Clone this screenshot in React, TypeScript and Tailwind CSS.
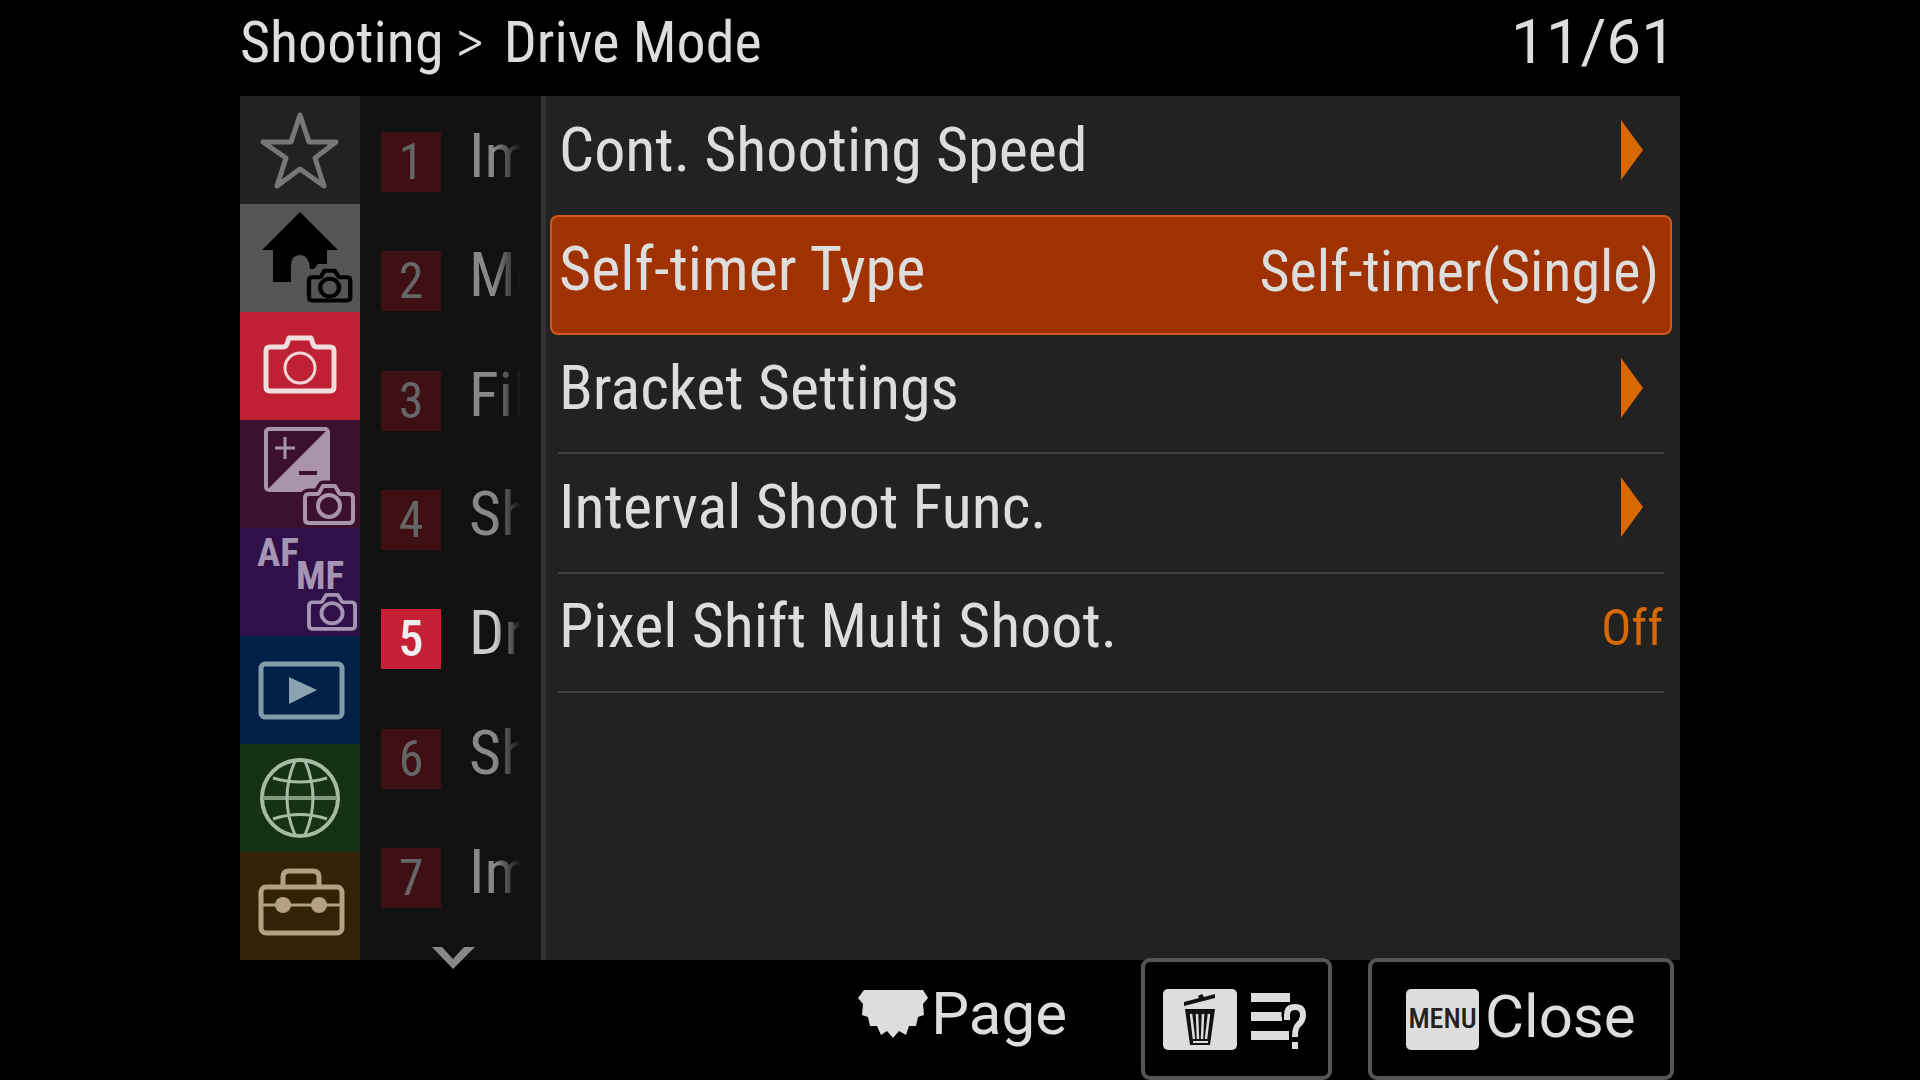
import type { ReactNode } from "react";

const smallCameraPath =
  "M4 9H12Q14 9 15 6L18 1H30L33 6Q34 9 36 9H44Q48 9 48 13V34Q48 38 44 38H4Q0 38 0 34V13Q0 9 4 9Z";

function TabIcon({ children }: { children: ReactNode }) {
  return (
    <svg viewBox="0 0 120 108" className="h-[108px] w-[120px] shrink-0" fill="none" strokeLinejoin="round" aria-hidden="true">
      {children}
    </svg>
  );
}

const tabs: { label: string; bg: string; icon: ReactNode }[] = [
  {
    label: "My Menu",
    bg: "bg-[#222222]",
    icon: (
      <TabIcon>
        <path d="M60 19L69 46H96L75 62L84 90L60 73L37 90L46 62L23 46H51Z" stroke="#777777" strokeWidth="5" />
      </TabIcon>
    ),
  },
  {
    label: "Main",
    bg: "bg-[#555555]",
    icon: (
      <TabIcon>
        <path d="M60 8L98 46H87V60H78L74 65H70Q69 51 60 51Q51 51 51 62V78H33V46H22Z" fill="#000000" />
        <g transform="translate(69 66) scale(0.86 0.8)" stroke="#000000" strokeWidth="5">
          <path d={smallCameraPath} fill="#555555" />
          <circle cx="24" cy="22" r="11" />
        </g>
      </TabIcon>
    ),
  },
  {
    label: "Shooting",
    bg: "bg-[#c02033]",
    icon: (
      <TabIcon>
        <path
          d="M30 35H43Q46 35 47 32L49 26H71L73 32Q74 35 77 35H90Q94 35 94 39V75Q94 79 90 79H30Q26 79 26 75V39Q26 35 30 35Z"
          stroke="#f0dede"
          strokeWidth="5"
        />
        <circle cx="60" cy="56" r="15" stroke="#f0d8d8" strokeWidth="3" />
      </TabIcon>
    ),
  },
  {
    label: "Exposure/Color",
    bg: "bg-[#3c1030]",
    icon: (
      <TabIcon>
        <rect x="26" y="9" width="62" height="61" rx="3" stroke="#aa94ac" strokeWidth="4" />
        <path d="M88 9V70H27Z" fill="#aa94ac" />
        <path d="M35 28H55M45 17V39" stroke="#aa94ac" strokeWidth="3" />
        <path d="M59 53H77" stroke="#3c1030" strokeWidth="4" />
        <g transform="translate(65 65)">
          <path d={smallCameraPath} fill="#3c1030" stroke="#3c1030" strokeWidth="11" />
          <path d={smallCameraPath} stroke="#aa94ac" strokeWidth="4" />
          <circle cx="24" cy="21" r="11" stroke="#aa94ac" strokeWidth="4" />
        </g>
      </TabIcon>
    ),
  },
  {
    label: "Focus",
    bg: "bg-[#2f1048]",
    icon: (
      <TabIcon>
        <g fill="#a694b4" fontFamily="'Roboto Condensed', Roboto, sans-serif" fontWeight="700" fontSize="39">
          <text x="17" y="38">AF</text>
          <text x="56" y="61">MF</text>
        </g>
        <g transform="translate(69 66) scale(0.96 0.92)" stroke="#a694b4" strokeWidth="4">
          <path d={smallCameraPath} />
          <circle cx="24" cy="21" r="11" />
        </g>
      </TabIcon>
    ),
  },
  {
    label: "Playback",
    bg: "bg-[#002045]",
    icon: (
      <TabIcon>
        <rect x="21" y="28" width="81" height="53" rx="4" stroke="#809ca8" strokeWidth="5" />
        <path d="M49 41L77 54L49 68Z" fill="#8ca4b2" />
      </TabIcon>
    ),
  },
  {
    label: "Network",
    bg: "bg-[#153212]",
    icon: (
      <TabIcon>
        <circle cx="60" cy="54" r="38" stroke="#a4bca4" strokeWidth="4" />
        <path d="M23 54H97" stroke="#7f987f" strokeWidth="4" />
        <path d="M33 34Q60 42 87 34M33 75Q60 66 87 75M55 17Q39 54 55 91M65 17Q81 54 65 91" stroke="#a4bca4" strokeWidth="3" />
      </TabIcon>
    ),
  },
  {
    label: "Setup",
    bg: "bg-[#332205]",
    icon: (
      <TabIcon>
        <g stroke="#b4a082" strokeWidth="5">
          <rect x="21" y="35" width="81" height="46" rx="5" />
          <path d="M43 34V25Q43 19 49 19H73Q79 19 79 25V34" />
        </g>
        <path d="M22 53H101" stroke="#b4a082" strokeWidth="3" />
        <circle cx="43" cy="53" r="8" fill="#b4a082" />
        <circle cx="79" cy="53" r="8" fill="#b4a082" />
      </TabIcon>
    ),
  },
];

const groups = ["Im", "Me", "Fil", "Sh", "Dr", "Sh", "Im"];

type Item = { label: string; value?: string; selected?: boolean; divider?: boolean };

const items: Item[] = [
  { label: "Cont. Shooting Speed" },
  { label: "Self-timer Type", value: "Self-timer(Single)", selected: true },
  { label: "Bracket Settings", divider: true },
  { label: "Interval Shoot Func.", divider: true },
  { label: "Pixel Shift Multi Shoot.", value: "Off", divider: true },
];

function GroupRow({ label, index, active }: { label: string; index: number; active: boolean }) {
  return (
    <button type="button" className="flex w-full items-center gap-7 overflow-hidden pl-[21px] text-left">
      <span
        className={`mt-3 flex h-[60px] w-[60px] shrink-0 items-center justify-center text-[50px] leading-none ${
          active ? "bg-[#c62036] font-medium text-[#eeeeee]" : "bg-[#3e1014] text-[#666666]"
        }`}
      >
        {index}
      </span>
      <span
        className={`w-[52px] overflow-hidden text-[62px] leading-[76px] whitespace-nowrap [mask-image:linear-gradient(to_right,black_50%,transparent)] ${
          active ? "text-[#cccccc]" : "text-[#888888]"
        }`}
      >
        {label}
      </span>
    </button>
  );
}

function ItemRow({ label, value, selected, divider }: Item) {
  const frame = selected
    ? "rounded-lg border-2 border-[#cc5a18] bg-[#9f3200] px-[7px] pb-3"
    : divider
      ? "mx-2 border-b-2 border-[#404040] px-px pb-3"
      : "mx-2 px-px pb-3";
  return (
    <button type="button" className={`flex items-center justify-between text-left text-[62px] leading-[76px] text-[#dddddd] ${frame}`}>
      <span>{label}</span>
      {selected && <span className="pt-1 pr-1 text-[58px]">{value}</span>}
      {!selected && value && <span className="pt-1 text-[50px] text-[#d86800]">{value}</span>}
      {!value && (
        <svg viewBox="0 0 22 60" className="mr-5 h-[60px] w-[22px]" aria-hidden="true">
          <path d="M0 0L22 30L0 60Z" fill="#d86800" />
        </svg>
      )}
    </button>
  );
}

export default function App() {
  return (
    <main className="flex min-h-screen flex-col bg-black px-[12.5%] font-['Roboto_Condensed',Roboto,sans-serif] text-[#dddddd]">
      <header className="flex h-24 items-center justify-between pr-1 pb-3 text-[58px] leading-none">
        <h1 className="flex items-center">
          <span>Shooting</span>
          <span className="ml-3 text-[62px] font-light">&gt;</span>
          <span className="ml-5">Drive Mode</span>
        </h1>
        <span className="font-[Roboto,sans-serif] text-[62px]">11/61</span>
      </header>

      <div className="flex flex-1">
        <nav className="grid w-[120px] shrink-0 grid-rows-8" aria-label="Menu tabs">
          {tabs.map((tab) => (
            <button key={tab.label} type="button" aria-label={tab.label} className={`flex items-center justify-center overflow-hidden ${tab.bg}`}>
              {tab.icon}
            </button>
          ))}
        </nav>

        <div className="relative grid w-[181px] shrink-0 grid-rows-7 bg-[#111111] pb-7">
          {groups.map((label, i) => (
            <GroupRow key={i} label={label} index={i + 1} active={i === 4} />
          ))}
          <svg viewBox="0 0 46 24" className="absolute -bottom-[10px] left-[70px] h-6 w-[46px]" fill="none" aria-hidden="true">
            <path d="M2 1H12L23 13L34 1H45L23 23Z" fill="#888888" />
          </svg>
        </div>

        <section className="grid flex-1 grid-rows-7 border-l-[5px] border-[#333333] bg-[#222222] pr-2 pb-7 pl-1" aria-label="Drive Mode">
          {items.map((item) => (
            <ItemRow key={item.label} {...item} />
          ))}
        </section>
      </div>

      <footer className="flex h-[120px] items-start justify-end pr-[6px] font-[Roboto,sans-serif] text-[60px] leading-none">
        <div className="mr-[74px] flex h-[120px] items-center gap-[3px] pb-3">
          <svg viewBox="0 0 70 48" className="h-12 w-[70px]" fill="#dddddd" aria-hidden="true">
            <path d="M6 0H65L70 8L65 14L66 25L60 27L58 36L51 36L48 45L41 41L35 48L29 41L23 45L19 36L12 36L10 27L4 25L5 14L0 8Z" />
          </svg>
          <span>Page</span>
        </div>

        <button
          type="button"
          aria-label="Help"
          className="relative -mt-[2px] mr-9 flex h-[122px] w-[191px] items-center gap-[14px] rounded-[9px] border-4 border-[#555555] bg-black pl-[18px]"
        >
          <svg viewBox="0 0 74 61" className="h-[61px] w-[74px]" aria-hidden="true">
            <rect width="74" height="61" rx="5" fill="#dddddd" />
            <path d="M21 13L36 9L35 7L39 5L41 8L52 5V9L21 17Z" fill="#111111" />
            <path d="M22 20H52L47 56H27Z" fill="#111111" />
            <path d="M28 25L31 50M34 25L35 50M40 25L39 50M46 25L43 50" stroke="#dddddd" strokeWidth="2.5" />
            <path d="M30 53H45" stroke="#dddddd" strokeWidth="2" />
          </svg>
          <svg viewBox="0 0 56 60" className="h-[60px] w-14" aria-hidden="true">
            <path d="M0 4H39V13H0ZM0 23H31V32H0ZM0 42H38V51H0Z" fill="#dddddd" />
            <path d="M36 28V26Q36 18 44 18Q52 18 52 26Q52 32 47 36Q44 39 44 47" fill="none" stroke="#000000" strokeWidth="11" />
            <path d="M36 31V26Q36 18 44 18Q52 18 52 26Q52 32 47 36Q44 39 44 48M44 53V61" fill="none" stroke="#dddddd" strokeWidth="6" />
          </svg>
        </button>

        <button
          type="button"
          className="relative -mt-[2px] flex h-[122px] w-[306px] items-center gap-[6px] rounded-[9px] border-4 border-[#555555] bg-black pl-[34px]"
        >
          <span className="flex h-[61px] w-[73px] items-center justify-center rounded-[5px] bg-[#dddddd] font-['Roboto_Condensed',Roboto,sans-serif] text-[28px] font-medium text-[#222222]">
            MENU
          </span>
          <span className="pb-1">Close</span>
        </button>
      </footer>
    </main>
  );
}
